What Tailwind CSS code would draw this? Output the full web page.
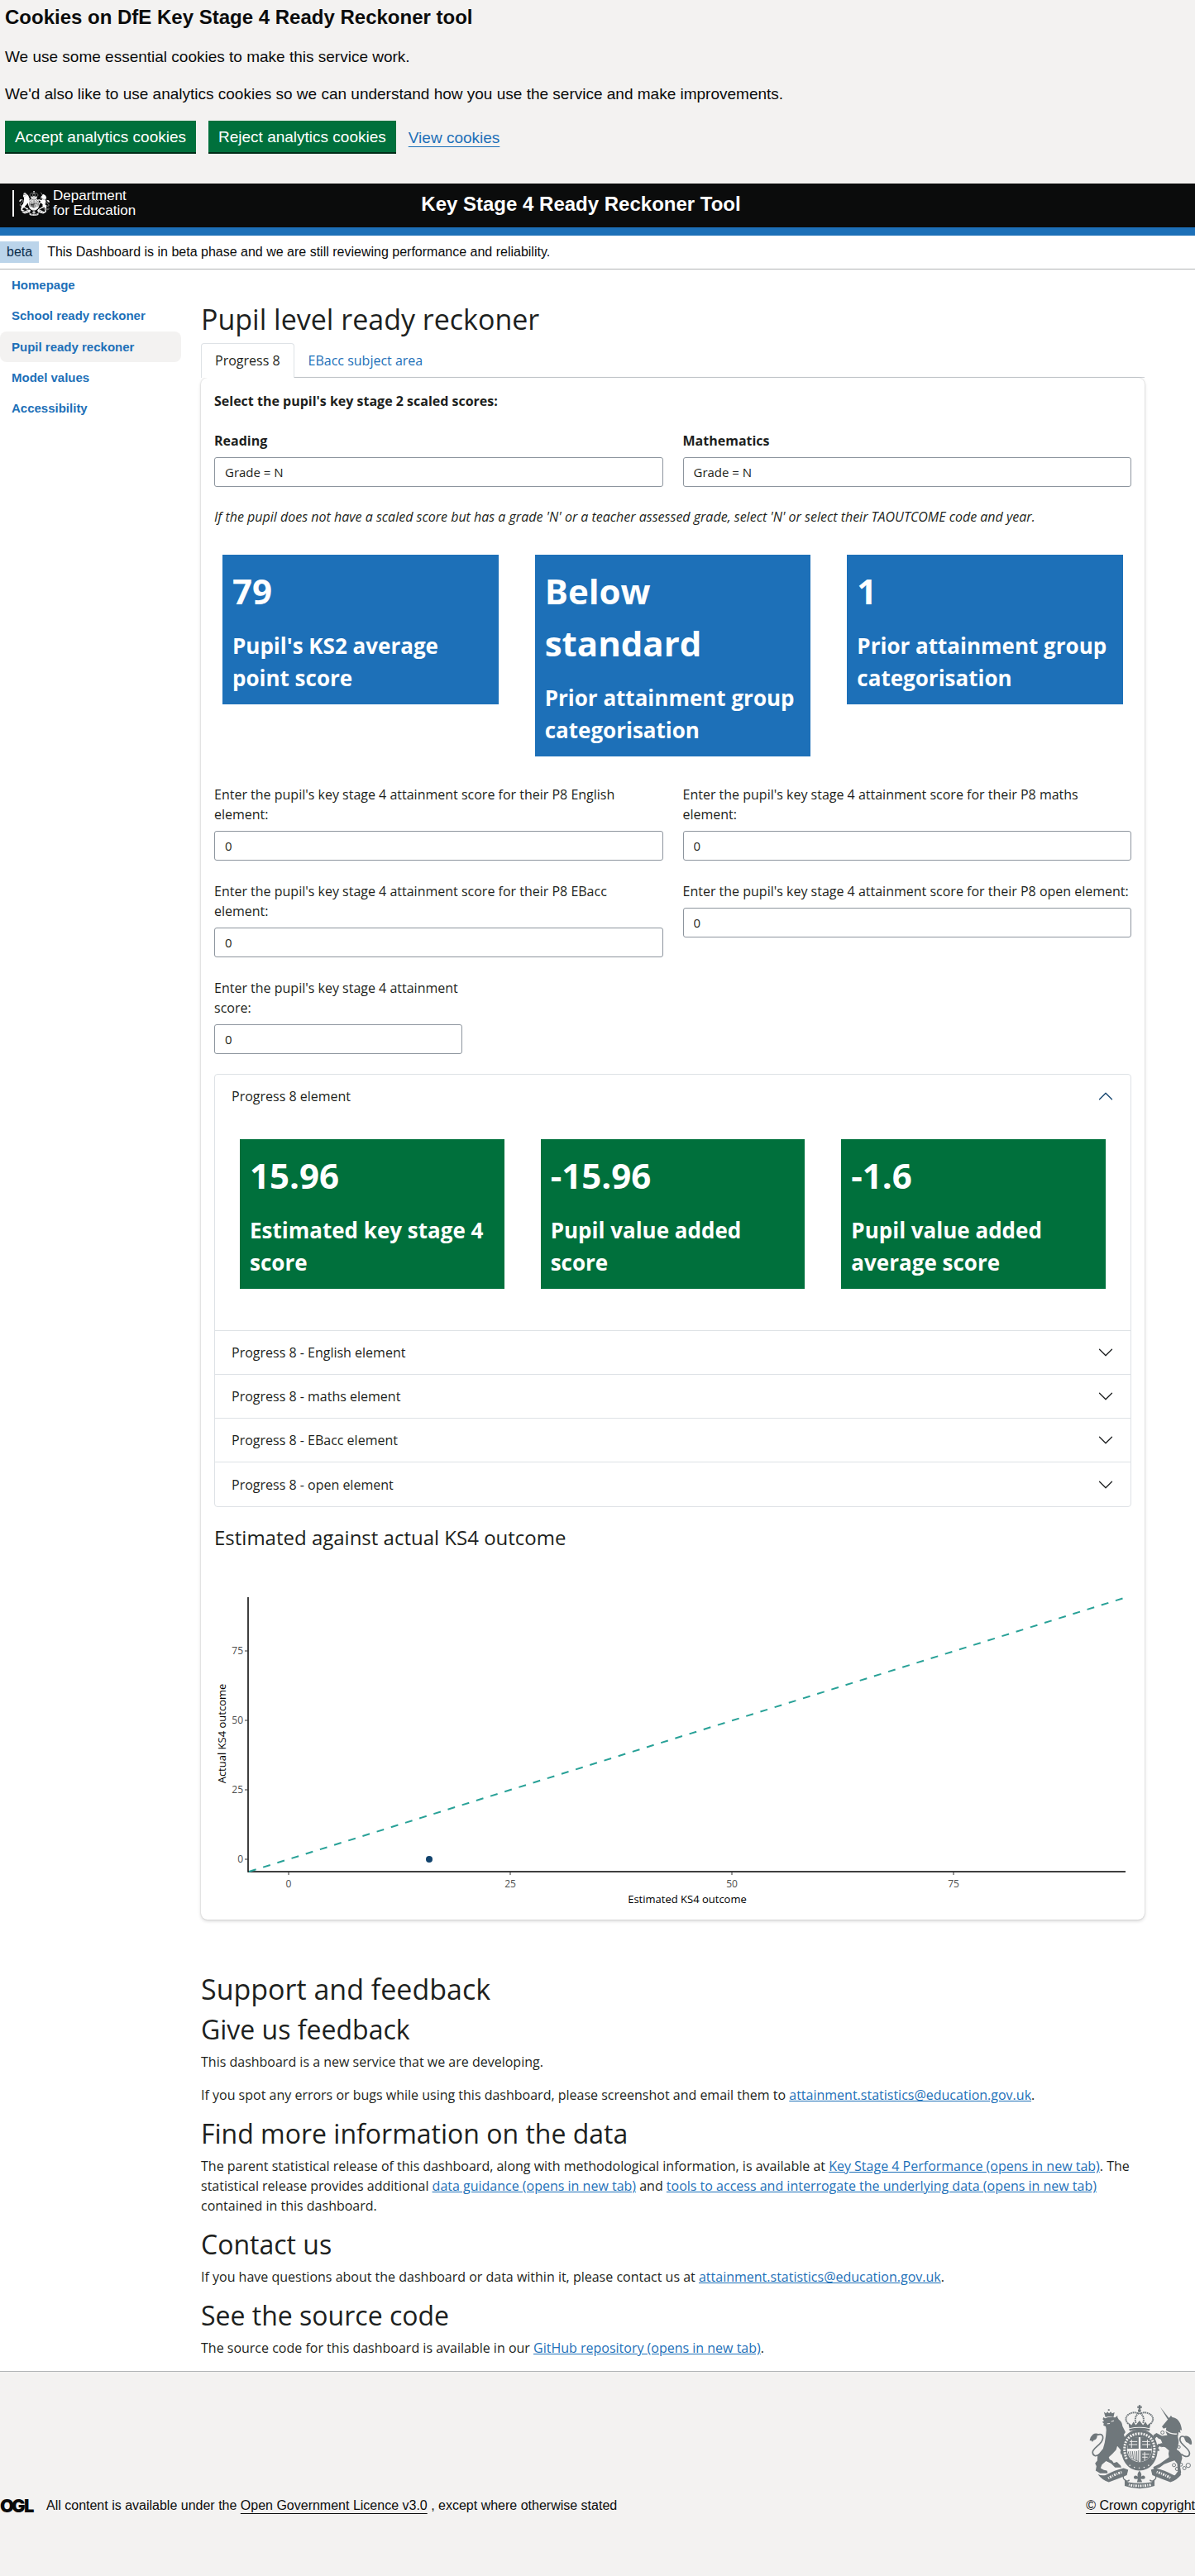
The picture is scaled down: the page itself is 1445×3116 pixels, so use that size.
<!DOCTYPE html>
<html lang="en">
<head>
<meta charset="utf-8">
<meta name="viewport" content="width=device-width, initial-scale=1">
<title>Key Stage 4 Ready Reckoner Tool</title>
<script src="https://cdn.jsdelivr.net/npm/@tailwindcss/browser@4"></script>
</head>
<body class="bg-white font-['Open_Sans',sans-serif] text-base text-[#1d1f20]">

<!-- Shared symbols -->
<svg class="hidden" aria-hidden="true">
  <symbol id="crest" viewBox="110 146 376 308">
    <g fill="currentColor" stroke="none">
      <!-- central crown -->
      <path d="M290 147h7v4h5v6h-5v5h-7v-5h-5v-6h5z"/>
      <circle cx="293" cy="167" r="6"/>
      <path d="M252 211l12 9 7-12 9 12 13-17 13 17 9-12 7 12 12-9-4 20q-37-8-74 0z"/>
      <path d="M255 234q38-9 76 0l-2 7q-36-8-72 0z"/>
      <!-- lion crown and body -->
      <path d="M178 162h6v5h-6zM163 172l8 5 5-6 6 6 6-6 5 6 9-4-4 18q-15-5-29 0z"/>
      <path d="M168 195q15-7 36-3l9-7q-3 7 4 14 13 9 14 25l11 22-6 9 5 14-6 16 9 8-10 4 6 10q10 10 7 18l-7-4-2 8-6-6-6 5-3-9 2-8-13-15-4 14-13 14-14 13 3 8q11 3 15 13l12-4 8 9q6 3 8 12h-23l-15-15-18-9-15 13-5 13 12 7 11 2q4 5 2 10h-27l-16-10 3-16-5-10 8-10 1-20 20-24 6-22 4-25 2-22-2-12-9-4 2-7-6-5 7-5-5-5 2-8z"/>
      <path d="M111 276q3-15 12-22 9-6 20-2-6 5-5 12-2 9-12 11l-5 7-2-5z"/>
      <!-- unicorn -->
      <path d="M368 153l34 43-5 4z"/>
      <path transform="translate(105 141)" d="M297 52L303 44L308 50Q338 54 343 98L336 96L338 108L331 104L328 122Q336 145 324 168Q342 176 344 200L336 228L340 250L338 262L322 272Q312 270 318 262L328 248L326 220L316 208Q296 214 278 222L262 234L242 240L238 232L262 220L296 196Q292 182 296 172L282 160L262 156L256 162L262 172L254 174L246 160L256 148L272 146L266 132L250 122L243 130L238 116L250 108L270 118L290 116L284 104L286 88L276 92L270 84Z"/>
      <path d="M484 290q1-20-10-27-11-7-21-1 5 5 6 12 3 9 12 11l7 6z"/>
      <!-- garter -->
      <path fill-rule="evenodd" d="M293 236c42 0 66 33 66 73 0 43-27 77-66 77s-66-34-66-77c0-40 24-73 66-73zm0 28a45 45 0 1 0 0 91 45 45 0 1 0 0-91z"/>
      <path d="M257 271q14-7 33-7v42h-41q0-20 8-35zM297 264q20 0 33 7 8 15 8 35h-41zM297 313h40q-2 34-40 42z"/>
      <!-- motto ribbon -->
      <path d="M141 400q12 5 28 3 34-19 66-26l17 6-5 20q-32 14-66 25-24-6-40-28z"/>
      <path d="M446 400q-12 5-28 3-34-19-66-26l-17 6 5 20q32 14 66 25 24-6 40-28z"/>
      <path d="M239 416l12 12q42 8 86 0l11-12v26q-54 20-109 0z"/>
      <!-- fleur de lis -->
      <path d="M293 387q10 10 6 21 12-9 15 3 0 7-9 6l-7-1 1 4q4 4 3 8h-18l3-12-8 1q-7 0-7-7 3-10 15-2-4-11 6-21z"/>
    </g>
    <g fill="none" stroke="currentColor">
      <path stroke-width="6" stroke-dasharray="5 2" d="M252 215c-26-26 14-52 40-36M334 215c26-26-14-52-40-36M280 212c-5-12-2-30 12-36M306 212c5-12 2-30-12-36"/>
      <path stroke-width="5" d="M139 256c20-8 26 8 15 25-13 18-31 25-32 38 0 14 13 17 25 7M456 262c-15-5-20 9-10 23 14 17 30 24 30 38 0 13-13 17-31 2"/>
      <path stroke-width="4" d="M236 403c-8 14 12 28 20 17M351 403c8 14-12 28-20 17"/>
      <path stroke-width="3" d="M252 316q1 27 38 37M259 315l5 20M267 315l4 28M275 315l3 33M283 315l1 36M290 312v42"/>
      <g stroke-width="3"><circle cx="377" cy="247" r="6"/><circle cx="366" cy="264" r="5"/><circle cx="374" cy="293" r="6"/><circle cx="437" cy="300" r="5"/><circle cx="419" cy="366" r="6"/><circle cx="430" cy="380" r="6"/><circle cx="444" cy="364" r="6"/><circle cx="457" cy="377" r="6"/><circle cx="471" cy="367" r="8"/></g>
    </g>
    <g class="stroke-(--paper)" fill="none">
      <path stroke-width="3" d="M257 280h28M254 291h31M303 280h28M303 291h30M303 326h26M303 337h20M264 273v30M322 273v30M312 318v32"/>
      <path stroke-width="4" d="M386 238q22 17 44 14"/>
      <path stroke-width="9" stroke-dasharray="6 4" d="M246 344c-20-50 0-92 47-93 46 1 67 42 47 93"/>
      <path stroke-width="4" stroke-dasharray="4 14" d="M256 366q37 22 76-2"/>
      <path stroke-width="3" d="M190 207l10-3M185 214l-10 1"/>
      <!-- lettering bands on the ribbon -->
      <path stroke-width="9" stroke-dasharray="3 4 6 4" d="M179 414q25-15 52-23M356 391q27 8 52 23M254 438q40 8 84-1"/>
    </g>
  </symbol>
  <symbol id="chevron" viewBox="0 0 16 16">
    <path fill="currentColor" fill-rule="evenodd" d="M1.646 4.646a.5.5 0 0 1 .708 0L8 10.293l5.646-5.647a.5.5 0 0 1 .708.708l-6 6a.5.5 0 0 1-.708 0l-6-6a.5.5 0 0 1 0-.708z"/>
  </symbol>
</svg>

<!-- Cookie banner -->
<section aria-label="Cookies" class="bg-[#f3f2f1] px-[6px] pt-[6px] pb-9 font-['Liberation_Sans',Arial,sans-serif] text-[19px] leading-[25px] text-[#0b0c0c]">
  <h2 class="mb-5 text-2xl leading-[30px] font-bold">Cookies on DfE Key Stage 4 Ready Reckoner tool</h2>
  <p class="mb-5">We use some essential cookies to make this service work.</p>
  <p class="mb-5">We'd also like to use analytics cookies so we can understand how you use the service and make improvements.</p>
  <div class="flex items-center gap-[15px]">
    <button type="button" class="h-10 border-b-2 border-[#002d18] bg-[#00703c] px-3 text-white">Accept analytics cookies</button>
    <button type="button" class="h-10 border-b-2 border-[#002d18] bg-[#00703c] px-3 text-white">Reject analytics cookies</button>
    <a href="#cookies" class="text-[#1d70b8] underline underline-offset-4">View cookies</a>
  </div>
</section>

<!-- Header -->
<header class="grid grid-cols-[1fr_auto_1fr] border-b-10 border-[#1d70b8] bg-[#0b0c0c] pb-[5px] font-['Liberation_Sans',Arial,sans-serif] text-white">
  <a href="#home" class="my-2 ml-[15px] flex h-8 items-center gap-1 border-l-2 border-white pl-[6px] text-[17px] leading-[18px]">
    <svg class="h-8 w-[37px] [--paper:#0b0c0c]" aria-hidden="true"><use href="#crest"/></svg>
    <span>Department<br>for Education</span>
  </a>
  <p class="-translate-x-5 pt-[10px] text-2xl leading-[30px] font-bold">Key Stage 4 Ready Reckoner Tool</p>
</header>

<!-- Phase banner -->
<div class="flex items-center gap-[10px] border-b border-[#b1b4b6] py-[7px] font-['Liberation_Sans',Arial,sans-serif] leading-[26px] text-[#0b0c0c]">
  <strong class="bg-[#bbd4ea] px-2 font-normal text-[#0c2d4a]">beta</strong>
  <span>This Dashboard is in beta phase and we are still reviewing performance and reliability.</span>
</div>

<div class="flex">
  <nav aria-label="Main" class="w-[219px] shrink-0 font-['Liberation_Sans',Arial,sans-serif] text-[15px] leading-[37px] font-bold text-[#1d70b8]">
    <a href="#home" class="block px-[14px]">Homepage</a>
    <a href="#school" class="block px-[14px]">School ready reckoner</a>
    <a href="#pupil" aria-current="page" class="mt-px block rounded-lg bg-[#f3f2f1] px-[14px]">Pupil ready reckoner</a>
    <a href="#models" class="block px-[14px]">Model values</a>
    <a href="#accessibility" class="block px-[14px]">Accessibility</a>
  </nav>

  <main class="min-w-0 flex-1 pt-10 pr-[61px] pb-4 pl-6">
    <h1 class="mb-2 text-[34px] leading-[41px]">Pupil level ready reckoner</h1>

    <div role="tablist" class="flex border-b border-[#ced2d6]">
      <button type="button" role="tab" aria-selected="true" class="-mb-px rounded-t border border-b-0 border-[#dee2e6] bg-white px-4 py-2 leading-[25px]">Progress 8</button>
      <button type="button" role="tab" aria-selected="false" class="px-[17px] pt-[9px] pb-[7px] leading-[25px] text-[#1d70b8]">EBacc subject area</button>
    </div>

    <section class="rounded-lg bg-white p-4 shadow-[0_0_2px_rgba(0,0,0,0.2),0_2px_4px_rgba(0,0,0,0.15)]">
      <p class="mb-6 font-bold">Select the pupil's key stage 2 scaled scores:</p>

      <div class="mb-6 grid grid-cols-2 gap-6">
        <div>
          <label for="reading" class="mb-2 block font-bold">Reading</label>
          <select id="reading" class="block h-9 w-full appearance-none rounded-[3px] border border-[#8d959e] bg-white px-3 text-[15px]"><option>Grade = N</option></select>
        </div>
        <div>
          <label for="maths" class="mb-2 block font-bold">Mathematics</label>
          <select id="maths" class="block h-9 w-full appearance-none rounded-[3px] border border-[#8d959e] bg-white px-3 text-[15px]"><option>Grade = N</option></select>
        </div>
      </div>

      <p class="mb-[34px] italic">If the pupil does not have a scaled score but has a grade 'N' or a teacher assessed grade, select 'N' or select their TAOUTCOME code and year.</p>

      <div class="mb-[34px] grid grid-cols-3 items-start gap-11 px-[10px] font-bold text-white">
        <div class="bg-[#1d70b8] p-3">
          <p class="mb-4 text-[42px] leading-[63px]">79</p>
          <p class="text-[26px] leading-[39px]">Pupil's KS2 average point score</p>
        </div>
        <div class="bg-[#1d70b8] p-3">
          <p class="mb-4 text-[42px] leading-[63px]">Below standard</p>
          <p class="text-[26px] leading-[39px]">Prior attainment group categorisation</p>
        </div>
        <div class="bg-[#1d70b8] p-3">
          <p class="mb-4 text-[42px] leading-[63px]">1</p>
          <p class="text-[26px] leading-[39px]">Prior attainment group categorisation</p>
        </div>
      </div>

      <div class="grid grid-cols-2 gap-x-6 gap-y-[25px]">
        <div>
          <label for="p8-english" class="mb-2 block">Enter the pupil's key stage 4 attainment score for their P8 English element:</label>
          <input id="p8-english" type="text" inputmode="numeric" value="0" class="block h-9 w-full rounded-[3px] border border-[#8d959e] px-3 text-[15px]">
        </div>
        <div>
          <label for="p8-maths" class="mb-2 block">Enter the pupil's key stage 4 attainment score for their P8 maths element:</label>
          <input id="p8-maths" type="text" inputmode="numeric" value="0" class="block h-9 w-full rounded-[3px] border border-[#8d959e] px-3 text-[15px]">
        </div>
        <div>
          <label for="p8-ebacc" class="mb-2 block">Enter the pupil's key stage 4 attainment score for their P8 EBacc element:</label>
          <input id="p8-ebacc" type="text" inputmode="numeric" value="0" class="block h-9 w-full rounded-[3px] border border-[#8d959e] px-3 text-[15px]">
        </div>
        <div>
          <label for="p8-open" class="mb-2 block">Enter the pupil's key stage 4 attainment score for their P8 open element:</label>
          <input id="p8-open" type="text" inputmode="numeric" value="0" class="block h-9 w-full rounded-[3px] border border-[#8d959e] px-3 text-[15px]">
        </div>
        <div class="w-[300px]">
          <label for="ks4" class="mb-2 block">Enter the pupil's key stage 4 attainment score:</label>
          <input id="ks4" type="text" inputmode="numeric" value="0" class="block h-9 w-full rounded-[3px] border border-[#8d959e] px-3 text-[15px]">
        </div>
      </div>

      <div class="mt-6 divide-y divide-[#dee2e6] rounded border border-[#dee2e6]">
        <div>
          <button type="button" aria-expanded="true" class="flex h-[51px] w-full items-center justify-between px-5"><span>Progress 8 element</span><svg class="size-5 rotate-180 text-[#12436d]" aria-hidden="true"><use href="#chevron"/></svg></button>
          <div class="grid grid-cols-3 items-start gap-11 px-[30px] pt-[27px] pb-[50px] font-bold text-white">
            <div class="bg-[#00703c] p-3">
              <p class="mb-4 text-[42px] leading-[63px]">15.96</p>
              <p class="text-[26px] leading-[39px]">Estimated key stage 4 score</p>
            </div>
            <div class="bg-[#00703c] p-3">
              <p class="mb-4 text-[42px] leading-[63px]">-15.96</p>
              <p class="text-[26px] leading-[39px]">Pupil value added score</p>
            </div>
            <div class="bg-[#00703c] p-3">
              <p class="mb-4 text-[42px] leading-[63px]">-1.6</p>
              <p class="text-[26px] leading-[39px]">Pupil value added average score</p>
            </div>
          </div>
        </div>
        <button type="button" aria-expanded="false" class="flex h-[53px] w-full items-center justify-between px-5"><span>Progress 8 - English element</span><svg class="size-5" aria-hidden="true"><use href="#chevron"/></svg></button>
        <button type="button" aria-expanded="false" class="flex h-[53px] w-full items-center justify-between px-5"><span>Progress 8 - maths element</span><svg class="size-5" aria-hidden="true"><use href="#chevron"/></svg></button>
        <button type="button" aria-expanded="false" class="flex h-[53px] w-full items-center justify-between px-5"><span>Progress 8 - EBacc element</span><svg class="size-5" aria-hidden="true"><use href="#chevron"/></svg></button>
        <button type="button" aria-expanded="false" class="flex h-[53px] w-full items-center justify-between px-5"><span>Progress 8 - open element</span><svg class="size-5" aria-hidden="true"><use href="#chevron"/></svg></button>
      </div>

      <h2 class="mt-[22px] mb-2 text-2xl leading-[29px]">Estimated against actual KS4 outcome</h2>

      <svg viewBox="0 0 1109 424" class="block h-auto w-full" role="img" aria-label="Estimated against actual KS4 outcome">
        <path d="M41 50V382H1102" fill="none" stroke="#000" stroke-width="1.5"/>
        <path d="M37 115h4M37 199h4M37 283h4M37 367h4M90 382v4M358 382v4M626 382v4M894 382v4" stroke="#333" stroke-width="1"/>
        <path d="M42 382L1100 51" stroke="#28a197" stroke-width="2" stroke-dasharray="9 9"/>
        <circle cx="260" cy="367" r="4" fill="#12436d"/>
        <g font-size="12" fill="#4d4d4d" text-anchor="end">
          <text x="35" y="119">75</text><text x="35" y="203">50</text><text x="35" y="287">25</text><text x="35" y="371">0</text>
        </g>
        <g font-size="12" fill="#4d4d4d" text-anchor="middle">
          <text x="90" y="401">0</text><text x="358" y="401">25</text><text x="626" y="401">50</text><text x="894" y="401">75</text>
        </g>
        <g font-size="13" fill="#000" text-anchor="middle">
          <text x="572" y="420">Estimated KS4 outcome</text>
          <text transform="translate(14 215) rotate(-90)">Actual KS4 outcome</text>
        </g>
      </svg>
    </section>

    <section class="mt-16">
      <h2 class="mb-[10px] text-[34px] leading-10">Support and feedback</h2>
      <h3 class="mb-2 text-[32px] leading-[38px]">Give us feedback</h3>
      <p class="mb-4">This dashboard is a new service that we are developing.</p>
      <p class="mb-4">If you spot any errors or bugs while using this dashboard, please screenshot and email them to <a href="mailto:attainment.statistics@education.gov.uk" class="text-[#1d70b8] underline">attainment.statistics@education.gov.uk</a>.</p>
      <h3 class="mb-2 text-[32px] leading-[38px]">Find more information on the data</h3>
      <p class="mb-4">The parent statistical release of this dashboard, along with methodological information, is available at <a href="#ks4-performance" class="text-[#1d70b8] underline">Key Stage 4 Performance (opens in new tab)</a>. The statistical release provides additional <a href="#guidance" class="text-[#1d70b8] underline">data guidance (opens in new tab)</a> and <a href="#tools" class="text-[#1d70b8] underline">tools to access and interrogate the underlying data (opens in new tab)</a> contained in this dashboard.</p>
      <h3 class="mb-2 text-[32px] leading-[38px]">Contact us</h3>
      <p class="mb-4">If you have questions about the dashboard or data within it, please contact us at <a href="mailto:attainment.statistics@education.gov.uk" class="text-[#1d70b8] underline">attainment.statistics@education.gov.uk</a>.</p>
      <h3 class="mb-2 text-[32px] leading-[38px]">See the source code</h3>
      <p>The source code for this dashboard is available in our <a href="#github" class="text-[#1d70b8] underline">GitHub repository (opens in new tab)</a>.</p>
    </section>
  </main>
</div>

<!-- Footer -->
<footer class="flex items-end justify-between border-t border-[#b1b4b6] bg-[#f3f2f1] pt-10 pb-[73px] font-['Liberation_Sans',Arial,sans-serif] leading-6 text-[#0b0c0c]">
  <div class="flex items-center gap-[13px]">
    <svg class="h-[18px] w-[43px] overflow-visible" viewBox="0 0 43 18" role="img" aria-label="Open Government Licence"><text x="0 14 29" y="17" font-family="Inter" font-weight="900" font-size="22" fill="#0b0c0c">OGL</text></svg>
    <p>All content is available under the <a href="#licence" class="underline underline-offset-4">Open Government Licence v3.0</a> , except where otherwise stated</p>
  </div>
  <a href="#crown-copyright" class="flex flex-col items-center underline underline-offset-4">
    <svg class="mb-2 h-[102px] w-[125px] text-[#6f777b] [--paper:#f3f2f1]" aria-hidden="true"><use href="#crest"/></svg>
    <span>© Crown copyright</span>
  </a>
</footer>
</body>
</html>
